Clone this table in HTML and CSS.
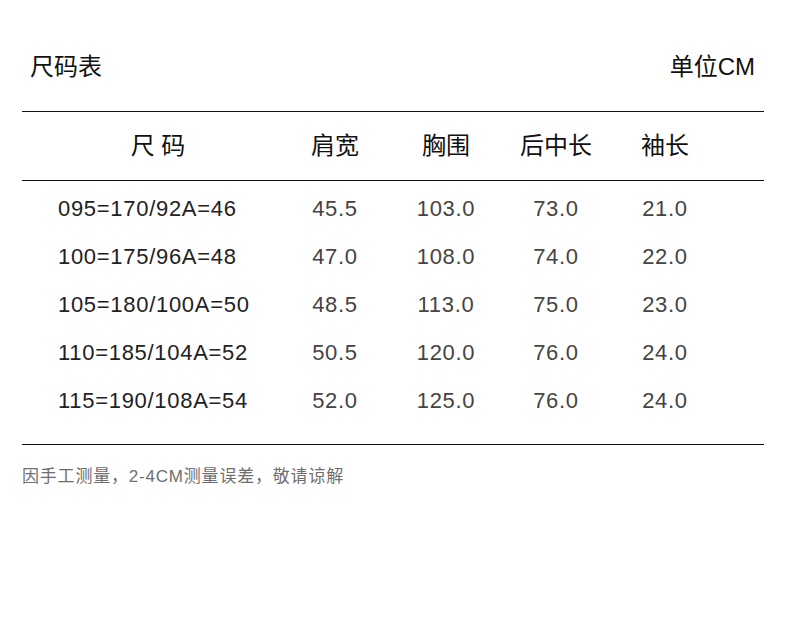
FILE: index.html
```html
<!DOCTYPE html>
<html lang="zh">
<head>
<meta charset="utf-8">
<link rel="stylesheet" href="styles.css">
</head>
<body>
<div class="page">
  <div class="top">
    <div class="title">尺码表</div>
    <div class="unit">单位CM</div>
  </div>
  <div class="table">
    <div class="row head">
      <div class="c1">尺 码</div>
      <div class="c">肩宽</div>
      <div class="c">胸围</div>
      <div class="c">后中长</div>
      <div class="c">袖长</div>
    </div>
    <div class="body">
      <div class="row data"><div class="c1">095=170/92A=46</div><div class="c">45.5</div><div class="c">103.0</div><div class="c">73.0</div><div class="c">21.0</div></div>
      <div class="row data"><div class="c1">100=175/96A=48</div><div class="c">47.0</div><div class="c">108.0</div><div class="c">74.0</div><div class="c">22.0</div></div>
      <div class="row data"><div class="c1">105=180/100A=50</div><div class="c">48.5</div><div class="c">113.0</div><div class="c">75.0</div><div class="c">23.0</div></div>
      <div class="row data"><div class="c1">110=185/104A=52</div><div class="c">50.5</div><div class="c">120.0</div><div class="c">76.0</div><div class="c">24.0</div></div>
      <div class="row data"><div class="c1">115=190/108A=54</div><div class="c">52.0</div><div class="c">125.0</div><div class="c">76.0</div><div class="c">24.0</div></div>
    </div>
  </div>
  <div class="note">因手工测量，2-4CM测量误差，敬请谅解</div>
</div>
</body>
</html>
```

FILE: styles.css
```css
html, body {
  margin: 0;
  padding: 0;
  background: #fff;
}
body {
  font-family: "Liberation Sans", "Noto Sans CJK SC", sans-serif;
  color: #111;
}
.page {
  width: 742px;
  margin-left: 22px;
}
.top {
  display: flex;
  justify-content: space-between;
  padding: 52px 9px 0 8px;
  margin-bottom: 29px;
  font-size: 24px;
  line-height: 30px;
  color: #111;
}
.table {
  border-top: 1px solid #111;
  border-bottom: 1px solid #111;
}
.row {
  display: grid;
  grid-template-columns: 272px 82px 140px 80px 138px;
}
.head {
  height: 68px;
  align-items: center;
  font-size: 24px;
  line-height: 30px;
  color: #111;
  border-bottom: 1px solid #111;
}
.head .c1 {
  text-align: center;
}
.c {
  text-align: center;
}
.body {
  padding: 4px 0 19px;
}
.data {
  height: 48px;
  align-items: center;
  font-size: 22px;
  line-height: 26px;
  letter-spacing: 0.7px;
  color: #444;
}
.data .c1 {
  padding-left: 36px;
  color: #222;
}
.note {
  margin-top: 22px;
  font-size: 17px;
  line-height: 20px;
  letter-spacing: 0.8px;
  color: #6e6e6e;
}
```
